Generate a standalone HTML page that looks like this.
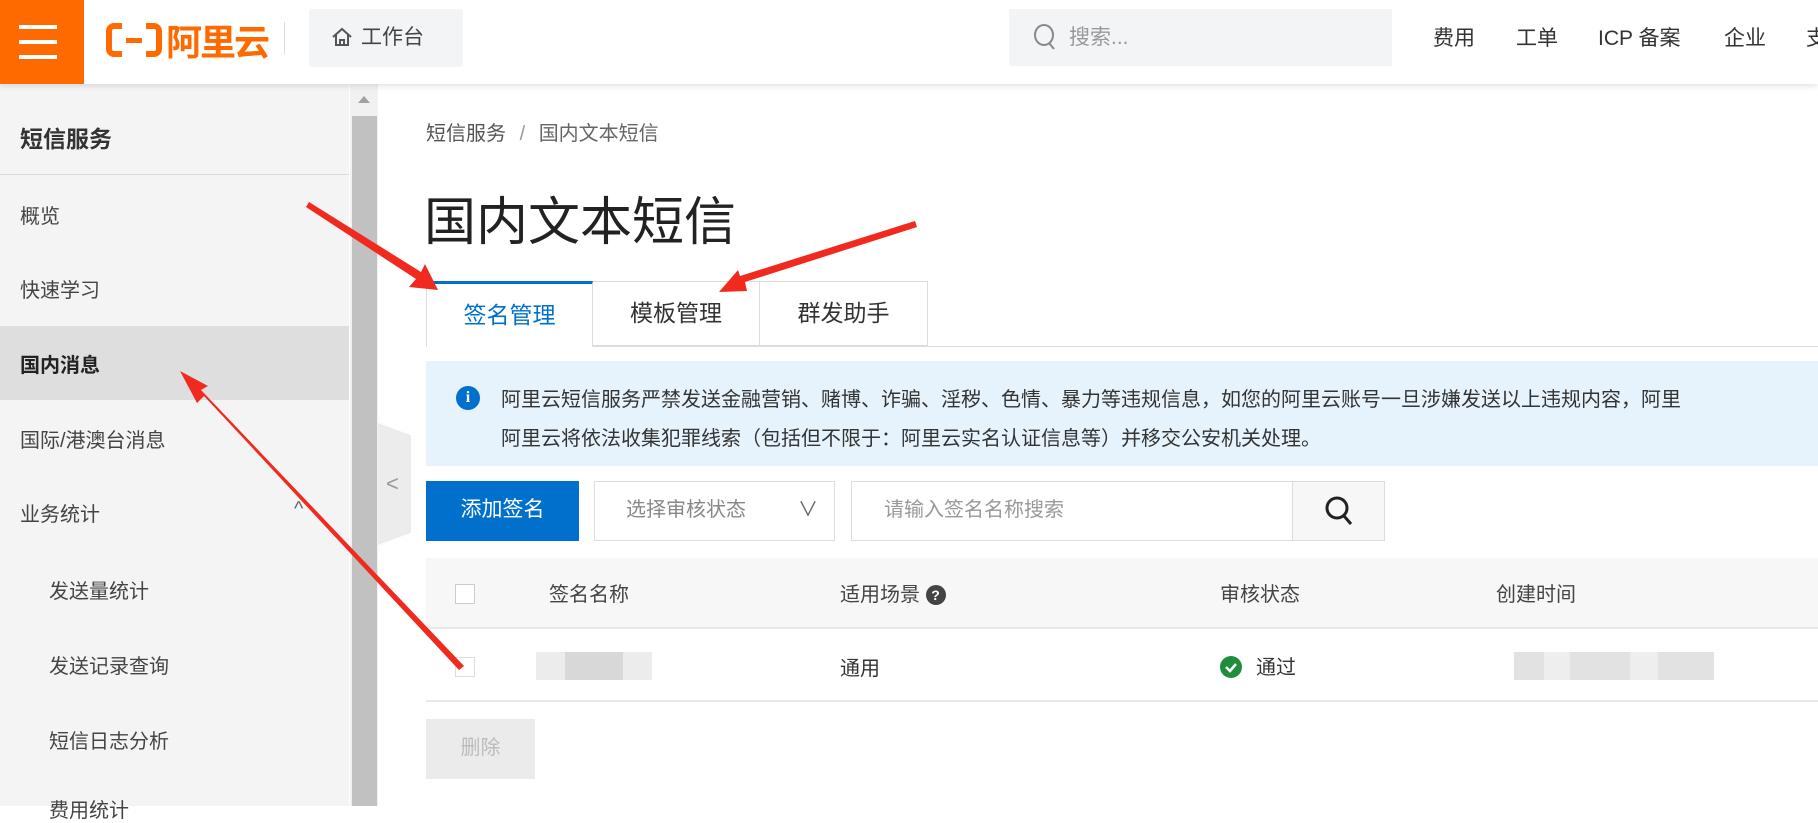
<!DOCTYPE html>
<html><head><meta charset="utf-8"><style>
*{margin:0;padding:0;box-sizing:border-box}
body{width:1818px;height:806px;overflow:hidden;background:#fff;font-family:"Liberation Sans","Noto Sans CJK SC",sans-serif;color:#333;position:relative}
.a{position:absolute;white-space:nowrap}
</style></head><body>
<div class="a" style="left:0;top:0;width:1818px;height:84px;background:#fff;box-shadow:0 2px 6px rgba(0,0,0,.12);z-index:2"></div>
<div class="a" style="left:0;top:0;width:84px;height:84px;background:#ff6a00;z-index:3">
 <div class="a" style="left:19px;top:25px;width:38px;height:4px;background:#fff"></div>
 <div class="a" style="left:19px;top:40px;width:38px;height:4px;background:#fff"></div>
 <div class="a" style="left:19px;top:55px;width:38px;height:4px;background:#fff"></div>
</div>
<div class="a" style="left:106px;top:18px;z-index:3;height:44px;display:flex;align-items:center">
 <svg width="56" height="36" viewBox="0 0 56 36"><path d="M16 4H8a5 5 0 0 0-5 5v18a5 5 0 0 0 5 5h8M40 4h8a5 5 0 0 1 5 5v18a5 5 0 0 1-5 5h-8" stroke="#ff6a00" stroke-width="6" fill="none"/><rect x="20" y="16" width="16" height="5" fill="#ff6a00"/></svg>
 <span style="color:#ff6a00;font-size:36px;font-weight:bold;margin-left:4px;letter-spacing:-2px">阿里云</span>
</div>
<div class="a" style="left:284px;top:22px;width:1px;height:32px;background:#ddd;z-index:3"></div>
<div class="a" style="left:309px;top:9px;width:154px;height:58px;background:#f3f4f6;border-radius:3px;z-index:3;font-size:21px;color:#444;line-height:58px;padding-left:22px">
 <svg width="22" height="20" viewBox="0 0 22 20" style="vertical-align:-3px;margin-right:8px"><path d="M2 10L11 2l9 8M5 8v10h12V8M9 18v-5h4v5" stroke="#555" stroke-width="2" fill="none"/></svg>工作台</div>
<div class="a" style="left:1009px;top:9px;width:383px;height:57px;background:#f3f4f6;z-index:3;font-size:21px;color:#999;line-height:57px;padding-left:24px">
 <svg width="24" height="28" viewBox="0 0 24 28" style="vertical-align:-7px;margin-right:12px"><ellipse cx="11" cy="12" rx="9" ry="10" stroke="#888" stroke-width="2" fill="none"/><path d="M16 20l5 6" stroke="#888" stroke-width="2"/></svg>搜索...</div>
<div class="a" style="top:22px;left:1433px;font-size:21px;color:#333;z-index:3">费用</div>
<div class="a" style="top:22px;left:1516px;font-size:21px;color:#333;z-index:3">工单</div>
<div class="a" style="top:22px;left:1598px;font-size:21px;color:#333;z-index:3">ICP 备案</div>
<div class="a" style="top:22px;left:1724px;font-size:21px;color:#333;z-index:3">企业</div>
<div class="a" style="top:22px;left:1806px;font-size:21px;color:#333;z-index:3">支</div>
<div class="a" style="left:0;top:84px;width:349px;height:722px;background:#f4f4f4"></div>
<div class="a" style="left:20px;top:120px;font-size:23px;font-weight:bold;color:#333">短信服务</div>
<div class="a" style="left:0;top:174px;width:349px;height:1px;background:#ddd"></div>
<div class="a" style="left:0;top:326px;width:349px;height:74px;background:#dedede"></div>
<div class="a" style="left:20px;top:200px;font-size:20px;color:#444">概览</div>
<div class="a" style="left:20px;top:274px;font-size:20px;color:#444">快速学习</div>
<div class="a" style="left:20px;top:349px;font-size:20px;color:#222;font-weight:bold">国内消息</div>
<div class="a" style="left:20px;top:424px;font-size:20px;color:#444">国际/港澳台消息</div>
<div class="a" style="left:20px;top:498px;font-size:20px;color:#444">业务统计</div>
<div class="a" style="left:294px;top:498px;font-size:20px;color:#666">^</div>
<div class="a" style="left:49px;top:575px;font-size:20px;color:#444">发送量统计</div>
<div class="a" style="left:49px;top:650px;font-size:20px;color:#444">发送记录查询</div>
<div class="a" style="left:49px;top:725px;font-size:20px;color:#444">短信日志分析</div>
<div class="a" style="left:49px;top:794px;font-size:20px;color:#444">费用统计</div>
<div class="a" style="left:350px;top:84px;width:28px;height:722px;background:#f1f1f1"></div>
<div class="a" style="left:352px;top:116px;width:25px;height:690px;background:#c1c1c1"></div>
<div class="a" style="left:358px;top:96px;width:0;height:0;border-left:6px solid transparent;border-right:6px solid transparent;border-bottom:7px solid #a0a0a0"></div>
<div class="a" style="left:378px;top:423px;width:33px;height:122px;background:#ececec;clip-path:polygon(0 0,100% 10%,100% 90%,0 100%);font-size:22px;color:#999;line-height:122px;padding-left:8px">&lt;</div>
<div class="a" style="left:426px;top:117px;font-size:20px;color:#555">短信服务 <span style="color:#999;margin:0 8px">/</span> <span style="color:#666">国内文本短信</span></div>
<div class="a" style="left:424px;top:180px;font-size:52px;color:#222">国内文本短信</div>
<div class="a" style="left:426px;top:346px;width:1392px;height:1px;background:#ddd"></div>
<div class="a" style="left:426px;top:281px;width:167px;height:66px;border:1px solid #ddd;border-bottom:none;border-top:3px solid #0070cc;background:#fff;font-size:23px;color:#0070cc;text-align:center;line-height:62px">签名管理</div>
<div class="a" style="left:593px;top:281px;width:167px;height:65px;border:1px solid #ddd;border-left:none;background:#fff;font-size:23px;color:#333;text-align:center;line-height:62px">模板管理</div>
<div class="a" style="left:760px;top:281px;width:168px;height:65px;border:1px solid #ddd;border-left:none;background:#fff;font-size:23px;color:#333;text-align:center;line-height:62px">群发助手</div>
<div class="a" style="left:426px;top:361px;width:1392px;height:105px;background:#e6f3fd"></div>
<div class="a" style="left:456px;top:386px;width:24px;height:24px;border-radius:50%;background:#0070cc;color:#fff;font-size:16px;font-weight:bold;text-align:center;line-height:24px;font-family:'Liberation Serif',serif">i</div>
<div class="a" style="left:501px;top:383px;font-size:20px;color:#333">阿里云短信服务严禁发送金融营销、赌博、诈骗、淫秽、色情、暴力等违规信息，如您的阿里云账号一旦涉嫌发送以上违规内容，阿里</div>
<div class="a" style="left:501px;top:422px;font-size:20px;color:#333">阿里云将依法收集犯罪线索（包括但不限于：阿里云实名认证信息等）并移交公安机关处理。</div>
<div class="a" style="left:426px;top:481px;width:153px;height:60px;background:#0070cc;color:#fff;font-size:21px;text-align:center;line-height:58px">添加签名</div>
<div class="a" style="left:594px;top:481px;width:241px;height:60px;border:1px solid #ddd;color:#888;font-size:20px;line-height:56px;padding-left:31px">选择审核状态<span style="position:absolute;right:16px;top:0;color:#666">&#8744;</span></div>
<div class="a" style="left:851px;top:481px;width:442px;height:60px;border:1px solid #ddd;color:#999;font-size:20px;line-height:56px;padding-left:32px">请输入签名名称搜索</div>
<div class="a" style="left:1292px;top:481px;width:93px;height:60px;border:1px solid #ddd;background:#f7f7f7">
 <svg width="30" height="32" viewBox="0 0 30 32" style="position:absolute;left:31px;top:13px"><circle cx="13" cy="13" r="10" stroke="#222" stroke-width="3" fill="none"/><path d="M20 21l7 8" stroke="#222" stroke-width="3"/></svg></div>
<div class="a" style="left:426px;top:558px;width:1392px;height:71px;background:#f7f7f7;border-bottom:2px solid #e8e8e8"></div>
<div class="a" style="left:455px;top:584px;width:20px;height:20px;border:1px solid #ccc;background:#fff"></div>
<div class="a" style="left:549px;top:578px;font-size:20px;color:#444">签名名称</div>
<div class="a" style="left:840px;top:578px;font-size:20px;color:#444">适用场景 <span style="display:inline-block;width:20px;height:20px;border-radius:50%;background:#444;color:#fff;font-size:14px;text-align:center;line-height:20px;font-weight:bold;vertical-align:1px">?</span></div>
<div class="a" style="left:1220px;top:578px;font-size:20px;color:#444">审核状态</div>
<div class="a" style="left:1496px;top:578px;font-size:20px;color:#444">创建时间</div>
<div class="a" style="left:426px;top:700px;width:1392px;height:2px;background:#e8e8e8"></div>
<div class="a" style="left:455px;top:657px;width:20px;height:20px;border:1px solid #ddd;background:#fff"></div>
<div class="a" style="left:536px;top:652px;width:116px;height:28px;background:linear-gradient(90deg,#ececec 0 25%,#d8d8d8 25% 75%,#ececec 75%)"></div>
<div class="a" style="left:840px;top:652px;font-size:20px;color:#333">通用</div>
<div class="a" style="left:1220px;top:656px;width:22px;height:22px;border-radius:50%;background:#1e8e3e"><svg width="22" height="22" viewBox="0 0 22 22"><path d="M6 11l4 4 6-7" stroke="#fff" stroke-width="2.5" fill="none"/></svg></div>
<div class="a" style="left:1256px;top:651px;font-size:20px;color:#333">通过</div>
<div class="a" style="left:1514px;top:652px;width:200px;height:28px;background:linear-gradient(90deg,#e2e2e2 0 15%,#eee 15% 28%,#e2e2e2 28% 58%,#eee 58% 72%,#e2e2e2 72%)"></div>
<div class="a" style="left:426px;top:719px;width:109px;height:60px;background:#ebebeb;color:#bbb;font-size:20px;text-align:center;line-height:58px">删除</div>
<svg class="a" style="left:0;top:0;z-index:5" width="1818" height="806">
 <g fill="#f02a1f">
  <polygon points="306,207 309,202 421,272 425,264 438,290 409,287 416,279"/>
  <polygon points="915,221 917,227 745,282 747,291 719,292 738,270 740,276"/>
  <polygon points="464,666 459,670 204,396 197,403 180,371 208,386 201,390"/>
 </g>
</svg>
</body></html>
